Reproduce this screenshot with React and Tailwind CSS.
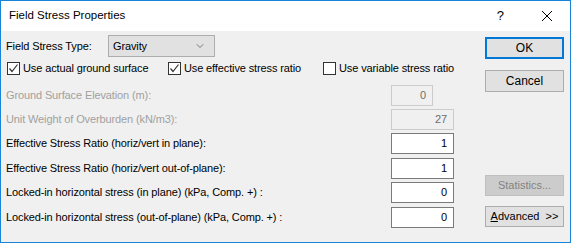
import { ChevronDown } from 'lucide-react';

function Check({ checked, label, className = '' }) {
  return (
    <label className={`flex items-center whitespace-nowrap ${className}`}>
      <span className="w-[13px] h-[13px] border border-[#333333] bg-white flex items-center justify-center shrink-0">
        {checked && (
          <svg width="11" height="11" viewBox="0 0 11 11">
            <path d="M1.5 5.5 L4 8.5 L9.5 1.5" fill="none" stroke="#333333" strokeWidth="1.2" />
          </svg>
        )}
      </span>
      <span className="ml-[3px]">{label}</span>
    </label>
  );
}

function Row({ label, value, disabled, narrow, className = '' }) {
  return (
    <div className={`flex items-center h-[21px] ${className}`}>
      <span className={`w-[385px] whitespace-nowrap ${disabled ? 'text-[#a0a0a0]' : 'text-black'}`}>{label}</span>
      <div
        className={`h-[21px] flex items-center justify-end pr-[6px] border ${narrow ? 'w-[42px]' : 'w-[63px]'} ${
          disabled ? 'border-[#cccccc] bg-[#f0f0f0] text-[#6d6d6d]' : 'border-[#7a7a7a] bg-white text-black'
        }`}
      >
        {value}
      </div>
    </div>
  );
}

function Btn({ children, className = '' }) {
  return (
    <div className={`w-[79px] flex items-center justify-center border ${className}`}>{children}</div>
  );
}

export default function App() {
  return (
    <div
      className="w-[571px] h-[243px] border border-[#1883d7] bg-[#f0f0f0] flex flex-col text-[11px] text-black"
      style={{ fontFamily: '"Liberation Sans", Arial, sans-serif' }}
    >
      {/* Title bar */}
      <div className="h-[30px] bg-white flex items-center shrink-0">
        <span className="ml-[8px] text-[11.5px]">Field Stress Properties</span>
        <span className="ml-auto text-[13px] mr-[37px]">?</span>
        <svg width="12" height="12" viewBox="0 0 12 12" className="mr-[17px]">
          <path d="M1 1 L11 11 M11 1 L1 11" stroke="#000" strokeWidth="1" />
        </svg>
      </div>

      <div className="flex flex-1 tracking-[-0.12px]">
        {/* Left side */}
        <div className="flex flex-col pl-[5px] w-[453px]">
          <div className="flex items-center mt-[4px] h-[22px]">
            <span className="w-[102px]">Field Stress Type:</span>
            <div className="w-[107px] h-[22px] border border-[#adadad] bg-[#e1e1e1] flex items-center pl-[4px] pr-[8px]">
              <span>Gravity</span>
              <ChevronDown className="ml-auto w-[12px] h-[12px] text-[#555555]" strokeWidth={1.5} />
            </div>
          </div>

          <div className="flex items-center h-[16px] mt-[3px] ml-[1px]">
            <Check checked label="Use actual ground surface" className="w-[162px]" />
            <Check checked label="Use effective stress ratio" className="w-[156px]" />
            <Check label="Use variable stress ratio" />
          </div>

          <Row label="Ground Surface Elevation (m):" value="0" disabled narrow className="mt-[9px]" />
          <Row label="Unit Weight of Overburden (kN/m3):" value="27" disabled className="mt-[3px]" />
          <Row label="Effective Stress Ratio (horiz/vert in plane):" value="1" className="mt-[3px]" />
          <Row label="Effective Stress Ratio (horiz/vert out-of-plane):" value="1" className="mt-[4px]" />
          <Row label="Locked-in horizontal stress (in plane) (kPa, Comp. +) :" value="0" className="mt-[3px]" />
          <Row label="Locked-in horizontal stress (out-of-plane) (kPa, Comp. +) :" value="0" className="mt-[4px]" />
        </div>

        {/* Right side buttons */}
        <div className="flex flex-col ml-[31px] text-[12px] tracking-normal">
          <Btn className="h-[22px] mt-[6px] border-2 border-[#0078d7] bg-[#e1e1e1]">OK</Btn>
          <Btn className="h-[22px] mt-[11px] border-[#adadad] bg-[#e1e1e1]">Cancel</Btn>
          <Btn className="h-[21px] mt-[83px] border-[#bfbfbf] bg-[#cccccc] text-[#838383] text-[11px]">Statistics...</Btn>
          <Btn className="h-[21px] mt-[10px] border-[#adadad] bg-[#e1e1e1] text-[11px]">
            <span><span className="underline">A</span>dvanced&nbsp;&nbsp;&gt;&gt;</span>
          </Btn>
        </div>
      </div>
    </div>
  );
}
